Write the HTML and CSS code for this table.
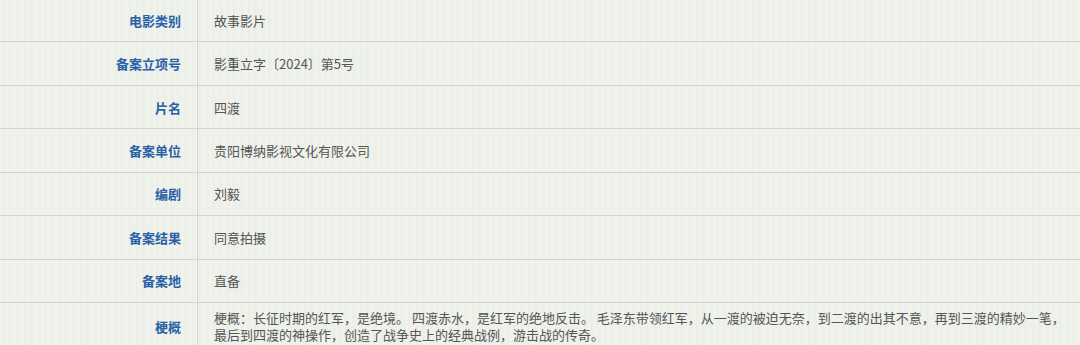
FILE: index.html
```html
<!DOCTYPE html>
<html lang="zh">
<head>
<meta charset="utf-8">
<link rel="stylesheet" href="styles.css">
</head>
<body>
<div class="sheet">
  <div class="row"><div class="label">电影类别</div><div class="value">故事影片</div></div>
  <div class="row"><div class="label">备案立项号</div><div class="value">影重立字〔2024〕第5号</div></div>
  <div class="row"><div class="label">片名</div><div class="value">四渡</div></div>
  <div class="row"><div class="label">备案单位</div><div class="value">贵阳博纳影视文化有限公司</div></div>
  <div class="row"><div class="label">编剧</div><div class="value">刘毅</div></div>
  <div class="row"><div class="label">备案结果</div><div class="value">同意拍摄</div></div>
  <div class="row"><div class="label">备案地</div><div class="value">直备</div></div>
  <div class="row tall"><div class="label">梗概</div><div class="value">梗概：长征时期的红军，是绝境。 四渡赤水，是红军的绝地反击。 毛泽东带领红军，从一渡的被迫无奈，到二渡的出其不意，再到三渡的精妙一笔，最后到四渡的神操作，创造了战争史上的经典战例，游击战的传奇。</div></div>
</div>
</body>
</html>
```
FILE: styles.css
```css
html, body {
  margin: 0;
  padding: 0;
}
body {
  width: 1080px;
  height: 345px;
  overflow: hidden;
  background-color: #eef0ea;
  background-image:
    repeating-linear-gradient(90deg, rgba(255,255,255,0.2) 0px, rgba(255,255,255,0.2) 1px, rgba(0,0,0,0) 1px, rgba(0,0,0,0) 3px, rgba(200,205,195,0.08) 3px, rgba(200,205,195,0.08) 4px, rgba(0,0,0,0) 4px, rgba(0,0,0,0) 7px);
  font-family: "Noto Sans CJK SC", "Noto Sans", sans-serif;
  font-size: 13px;
}
.sheet {
  margin-top: -1px;
  display: flex;
  flex-direction: column;
}
.row {
  display: grid;
  grid-template-columns: 198px 1fr;
  border-bottom: 1px solid #d2d4ce;
  min-height: 42.45px;
}
.label {
  border-right: 1px solid #d2d4ce;
  display: flex;
  align-items: center;
  justify-content: flex-end;
  padding-right: 16px;
  font-weight: bold;
  color: #2862a6;
}
.value {
  display: flex;
  align-items: center;
  padding: 0 10px 0 16px;
  color: #555555;
  line-height: 17px;
}
.tall .value {
  display: block;
  padding-top: 6px;
  padding-bottom: 6px;
}
```
